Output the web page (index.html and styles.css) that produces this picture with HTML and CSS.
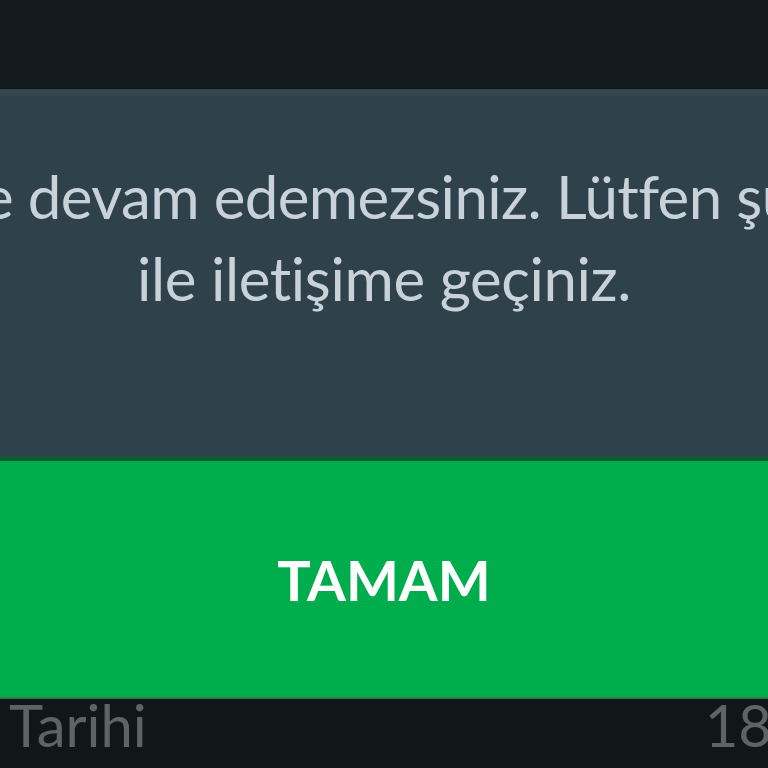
FILE: index.html
```html
<!DOCTYPE html>
<html lang="tr">
<head>
<meta charset="utf-8">
<title>Uyarı</title>
<link rel="stylesheet" href="styles.css">
</head>
<body>
<div class="screen">
  <div class="topbar"></div>
  <div class="dialog">
    <div class="message">
      <p class="line line-first">e devam edemezsiniz. Lütfen şubemiz</p>
      <p class="line">ile iletişime geçiniz.</p>
    </div>
    <div class="actions">
      <button class="ok">TAMAM</button>
    </div>
  </div>
  <div class="below">
    <span class="label">Tarihi</span>
    <span class="value">18</span>
  </div>
</div>
</body>
</html>
```
FILE: styles.css
```css
html, body {
  margin: 0;
  padding: 0;
  background: #121a1d;
}
.screen {
  width: 768px;
  height: 768px;
  overflow: hidden;
  display: flex;
  flex-direction: column;
  font-family: Lato, "Noto Sans", sans-serif;
  font-variant-ligatures: none;
}
.topbar {
  height: 88px;
  flex-shrink: 0;
  background: #121a1d;
  border-bottom: 1px solid #0a1418;
}
.dialog {
  display: flex;
  flex-direction: column;
  background: #2f414b;
  border-top: 7px solid #34464f;
}
.message {
  height: 360px;
  box-sizing: border-box;
  padding-top: 59px;
  overflow: hidden;
}
.line {
  margin: 0;
  font-size: 60px;
  line-height: 82px;
  letter-spacing: -0.4px;
  color: #c9d2d8;
  white-space: nowrap;
  text-align: center;
  font-variant-ligatures: none;
}
.line-first {
  text-align: left;
  text-indent: -18px;
  letter-spacing: -0.6px;
  overflow: hidden;
}
.actions {
  border-top: 5px solid #0d5a33;
  border-bottom: 2px solid #2c7a48;
  background: #00ad4c;
}
.ok {
  display: block;
  width: 100%;
  height: 236px;
  border: 0;
  padding: 0;
  background: #00ad4c;
  color: #ffffff;
  font-family: Lato, "Noto Sans", sans-serif;
  font-weight: 700;
  font-size: 56px;
  letter-spacing: 0;
}
.below {
  flex: 1;
  display: flex;
  justify-content: space-between;
  align-items: flex-start;
  padding: 0 0 0 9px;
  background: #111719;
  color: #5e6366;
  font-size: 58px;
  line-height: 52px;
}
.value {
  margin-right: -4px;
}
```
